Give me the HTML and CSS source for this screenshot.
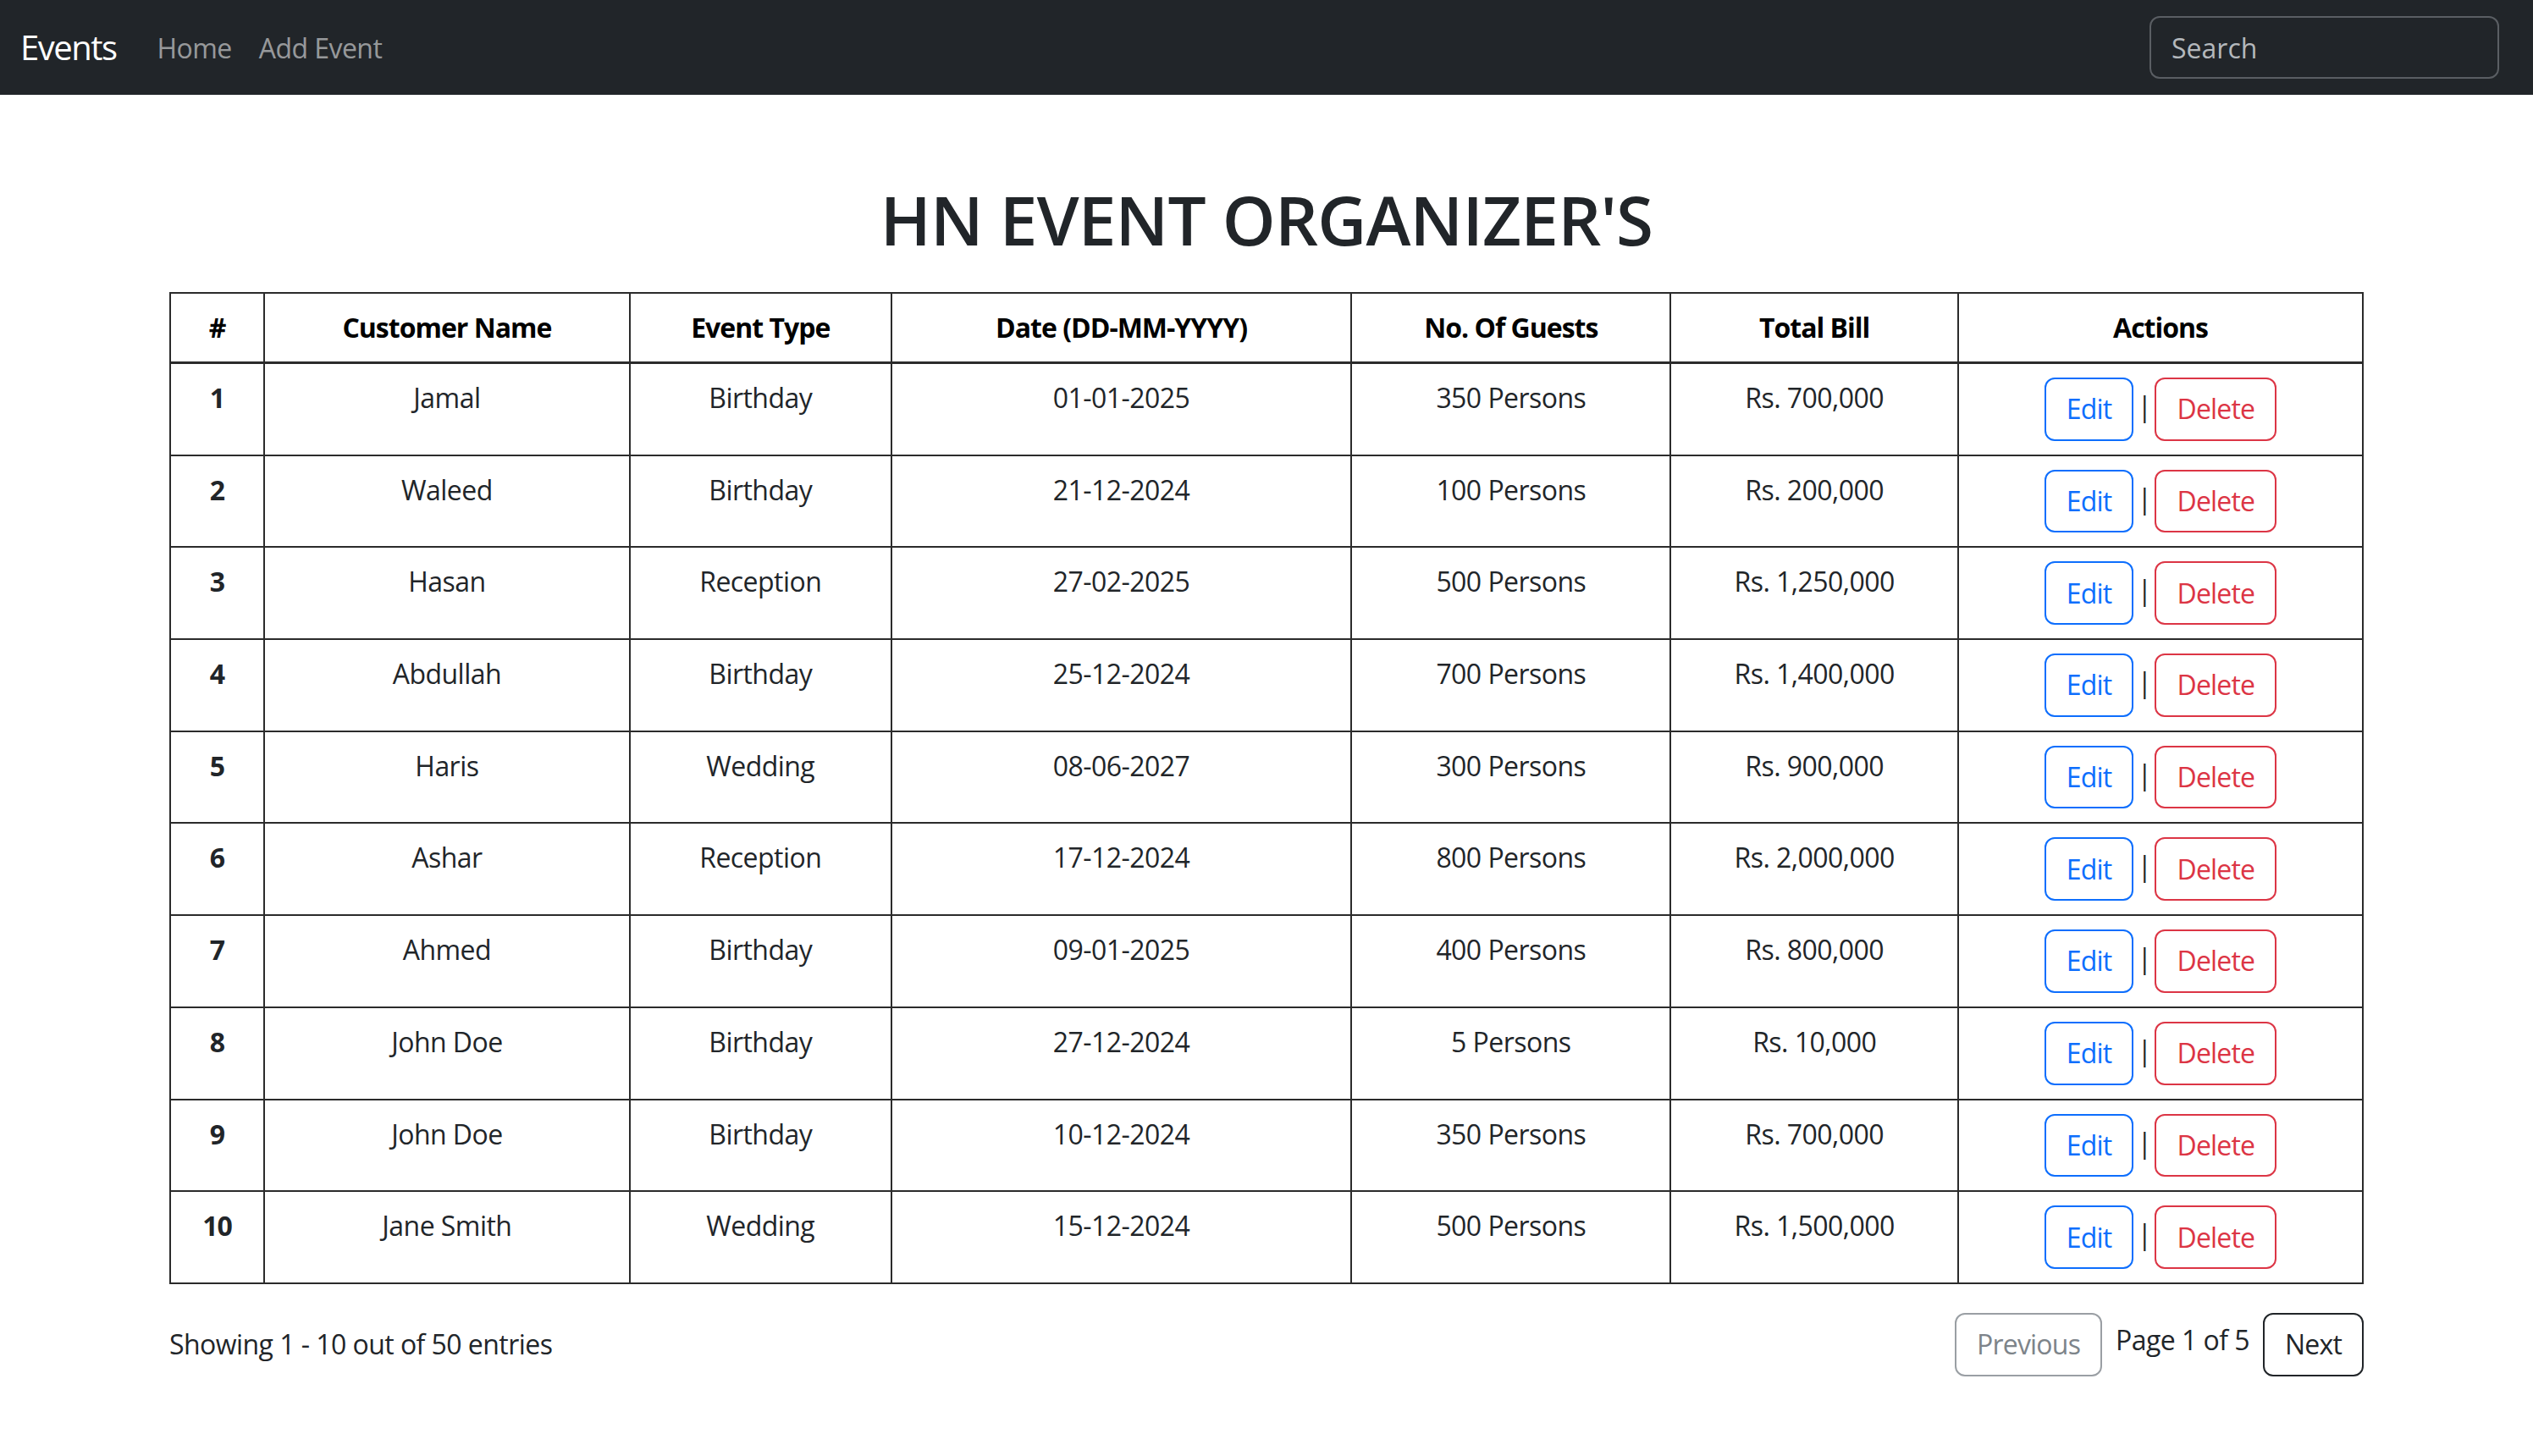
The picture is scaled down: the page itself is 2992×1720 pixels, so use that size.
FILE: index.html
```html
<!DOCTYPE html>
<html lang="en">
<head>
    <meta charset="UTF-8">
    <meta name="viewport" content="width=device-width, initial-scale=1.0">
    <title>Events</title>
    <link rel="stylesheet" href="styles.css">
</head>
<body>
    <nav class="navbar">
        <a class="brand" href="#">Events</a>
        <ul class="nav-links">
            <li><a href="#">Home</a></li>
            <li><a href="#">Add Event</a></li>
        </ul>
        <form class="search">
            <input type="search" placeholder="Search">
        </form>
    </nav>

    <div class="container">
        <h1>HN EVENT ORGANIZER'S</h1>
        <table class="events">
            <colgroup>
                <col class="c-num">
                <col class="c-name">
                <col class="c-type">
                <col class="c-date">
                <col class="c-guests">
                <col class="c-bill">
                <col class="c-actions">
            </colgroup>
            <thead>
                <tr>
                    <th>#</th>
                    <th>Customer Name</th>
                    <th>Event Type</th>
                    <th>Date (DD-MM-YYYY)</th>
                    <th>No. Of Guests</th>
                    <th>Total Bill</th>
                    <th>Actions</th>
                </tr>
            </thead>
            <tbody id="eventRows"></tbody>
        </table>
        <div class="pager">
            <span>Showing 1 - 10 out of 50 entries</span>
            <div class="pager-btns">
                <button class="btn btn-prev" disabled>Previous</button>
                <span class="page-no">Page 1 of 5</span>
                <button class="btn btn-next">Next</button>
            </div>
        </div>
    </div>

    <script>
        let events = [
            { name: "Jamal", type: "Birthday", date: "01-01-2025", guests: 350, bill: "700,000" },
            { name: "Waleed", type: "Birthday", date: "21-12-2024", guests: 100, bill: "200,000" },
            { name: "Hasan", type: "Reception", date: "27-02-2025", guests: 500, bill: "1,250,000" },
            { name: "Abdullah", type: "Birthday", date: "25-12-2024", guests: 700, bill: "1,400,000" },
            { name: "Haris", type: "Wedding", date: "08-06-2027", guests: 300, bill: "900,000" },
            { name: "Ashar", type: "Reception", date: "17-12-2024", guests: 800, bill: "2,000,000" },
            { name: "Ahmed", type: "Birthday", date: "09-01-2025", guests: 400, bill: "800,000" },
            { name: "John Doe", type: "Birthday", date: "27-12-2024", guests: 5, bill: "10,000" },
            { name: "John Doe", type: "Birthday", date: "10-12-2024", guests: 350, bill: "700,000" },
            { name: "Jane Smith", type: "Wedding", date: "15-12-2024", guests: 500, bill: "1,500,000" }
        ];

        function renderRows() {
            let body = document.getElementById("eventRows");
            body.innerHTML = "";
            events.forEach((ev, index) => {
                let tr = document.createElement("tr");
                tr.innerHTML = `<th>${index + 1}</th>` +
                               `<td>${ev.name}</td>` +
                               `<td>${ev.type}</td>` +
                               `<td>${ev.date}</td>` +
                               `<td>${ev.guests} Persons</td>` +
                               `<td>Rs. ${ev.bill}</td>` +
                               `<td><div class="actions">` +
                               `<a href="#" class="btn btn-edit">Edit</a>` +
                               `<span class="sep">|</span>` +
                               `<a href="#" class="btn btn-delete">Delete</a>` +
                               `</div></td>`;
                body.appendChild(tr);
            });
        }

        renderRows();
    </script>
</body>
</html>
```

FILE: styles.css
```css
* {
    box-sizing: border-box;
}
body {
    margin: 0;
    font-family: "Segoe UI", "Open Sans", sans-serif;
    font-size: 32px;
    line-height: 1.5;
    letter-spacing: -0.55px;
    color: #212529;
    background: #fff;
}
a {
    text-decoration: none;
}

/* navbar */
.navbar {
    display: flex;
    align-items: center;
    height: 112px;
    padding: 16px 24px;
    background: #212529;
}
.brand {
    font-size: 40px;
    line-height: 60px;
    letter-spacing: -1.5px;
    color: #fff;
    margin-right: 32px;
}
.nav-links {
    display: flex;
    list-style: none;
    margin: 0;
    padding: 0;
}
.nav-links a {
    display: block;
    padding: 17px 16px 15px;
    line-height: 48px;
    color: rgba(255, 255, 255, 0.55);
}
.search {
    margin: 0 16px 0 auto;
}
.search input {
    width: 413px;
    height: 74px;
    padding: 0 24px;
    font: inherit;
    color: #fff;
    background: #212529;
    border: 2px solid #5a5e63;
    border-radius: 12px;
}
.search input::placeholder {
    color: #b4b8bc;
}

/* page */
.container {
    width: 2592px;
    margin: 0 auto;
}
h1 {
    margin: 99px 0 38px;
    font-size: 80px;
    font-weight: 600;
    line-height: 96px;
    letter-spacing: -0.8px;
    text-align: center;
}

/* table */
.events {
    width: 100%;
    border-collapse: collapse;
    margin-bottom: 34px;
}
.c-num { width: 111px; }
.c-name { width: 432px; }
.c-type { width: 309px; }
.c-date { width: 544px; }
.c-guests { width: 377px; }
.c-bill { width: 340px; }
.c-actions { width: 478px; }
.events th, .events td {
    padding: 16px;
    border: 2px solid #2b2b2b;
    text-align: center;
    vertical-align: top;
    font-weight: 400;
}
.events th {
    font-weight: 700;
    letter-spacing: -1px;
}
.events thead th {
    color: #000;
    border-bottom-width: 3px;
}
.actions {
    display: flex;
    justify-content: center;
    align-items: flex-start;
}
.sep {
    margin: 10px 4px 0;
    color: #212529;
}

/* buttons */
.btn {
    display: inline-block;
    padding: 11.35px 24px;
    font: inherit;
    line-height: 48px;
    letter-spacing: -0.8px;
    background: transparent;
    border: 2px solid;
    border-radius: 12px;
    cursor: pointer;
}
.btn-edit {
    color: #0d6efd;
    border-color: #0d6efd;
}
.btn-delete {
    color: #dc3545;
    border-color: #dc3545;
}
.btn-prev {
    color: #7d848a;
    border-color: #9a9fa4;
    cursor: default;
}
.btn-next {
    color: #212529;
    border-color: #212529;
}

/* pagination */
.pager {
    display: flex;
    justify-content: space-between;
    align-items: center;
}
.pager-btns {
    display: flex;
    align-items: flex-start;
}
.page-no {
    margin: 0 16px;
    padding-top: 8px;
}
```
